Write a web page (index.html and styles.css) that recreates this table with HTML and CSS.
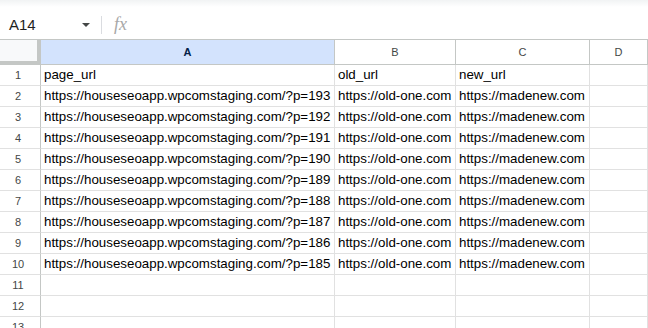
FILE: index.html
```html
<!DOCTYPE html>
<html lang="en">
<head>
    <meta charset="UTF-8">
    <meta name="viewport" content="width=device-width, initial-scale=1.0">
    <title>Redirects sheet</title>
    <link rel="stylesheet" href="styles.css">
</head>
<body>
    <div class="formula-bar">
        <div class="name-box">
            <span class="cell-ref">A14</span>
            <span class="caret"></span>
        </div>
        <span class="divider"></span>
        <span class="fx">fx</span>
    </div>

    <div class="sheet">
        <div class="corner"></div>
        <div class="col-head selected">A</div>
        <div class="col-head">B</div>
        <div class="col-head">C</div>
        <div class="col-head">D</div>

        <div class="row-head">1</div>
        <div class="cell">page_url</div>
        <div class="cell">old_url</div>
        <div class="cell">new_url</div>
        <div class="cell"></div>

        <div class="row-head">2</div>
        <div class="cell">https://houseseoapp.wpcomstaging.com/?p=193</div>
        <div class="cell">https://old-one.com</div>
        <div class="cell">https://madenew.com</div>
        <div class="cell"></div>

        <div class="row-head">3</div>
        <div class="cell">https://houseseoapp.wpcomstaging.com/?p=192</div>
        <div class="cell">https://old-one.com</div>
        <div class="cell">https://madenew.com</div>
        <div class="cell"></div>

        <div class="row-head">4</div>
        <div class="cell">https://houseseoapp.wpcomstaging.com/?p=191</div>
        <div class="cell">https://old-one.com</div>
        <div class="cell">https://madenew.com</div>
        <div class="cell"></div>

        <div class="row-head">5</div>
        <div class="cell">https://houseseoapp.wpcomstaging.com/?p=190</div>
        <div class="cell">https://old-one.com</div>
        <div class="cell">https://madenew.com</div>
        <div class="cell"></div>

        <div class="row-head">6</div>
        <div class="cell">https://houseseoapp.wpcomstaging.com/?p=189</div>
        <div class="cell">https://old-one.com</div>
        <div class="cell">https://madenew.com</div>
        <div class="cell"></div>

        <div class="row-head">7</div>
        <div class="cell">https://houseseoapp.wpcomstaging.com/?p=188</div>
        <div class="cell">https://old-one.com</div>
        <div class="cell">https://madenew.com</div>
        <div class="cell"></div>

        <div class="row-head">8</div>
        <div class="cell">https://houseseoapp.wpcomstaging.com/?p=187</div>
        <div class="cell">https://old-one.com</div>
        <div class="cell">https://madenew.com</div>
        <div class="cell"></div>

        <div class="row-head">9</div>
        <div class="cell">https://houseseoapp.wpcomstaging.com/?p=186</div>
        <div class="cell">https://old-one.com</div>
        <div class="cell">https://madenew.com</div>
        <div class="cell"></div>

        <div class="row-head">10</div>
        <div class="cell">https://houseseoapp.wpcomstaging.com/?p=185</div>
        <div class="cell">https://old-one.com</div>
        <div class="cell">https://madenew.com</div>
        <div class="cell"></div>

        <div class="row-head">11</div>
        <div class="cell"></div>
        <div class="cell"></div>
        <div class="cell"></div>
        <div class="cell"></div>

        <div class="row-head">12</div>
        <div class="cell"></div>
        <div class="cell"></div>
        <div class="cell"></div>
        <div class="cell"></div>

        <div class="row-head">13</div>
        <div class="cell"></div>
        <div class="cell"></div>
        <div class="cell"></div>
        <div class="cell"></div>
    </div>
</body>
</html>
```

FILE: styles.css
```css
body {
    margin: 0;
    font-family: "Liberation Sans", Arial, sans-serif;
    background: #fff;
    color: #000;
    overflow: hidden;
}

/* name box + fx row */
.formula-bar {
    height: 39px;
    display: flex;
    align-items: center;
    background: linear-gradient(#f1f3f4 0, #fff 7px);
    box-sizing: border-box;
    padding-top: 10px;
}

.name-box {
    width: 92px;
    display: flex;
    align-items: center;
    justify-content: space-between;
    padding-left: 9px;
    box-sizing: border-box;
}

.cell-ref {
    font-size: 15px;
    color: #1f1f1f;
}

.caret {
    width: 0;
    height: 0;
    border-left: 4px solid transparent;
    border-right: 4px solid transparent;
    border-top: 4px solid #444746;
    margin-right: 2px;
}

.divider {
    width: 1px;
    height: 18px;
    background: #dadce0;
    margin-left: 9px;
}

.fx {
    margin-left: 12px;
    font-family: "Liberation Serif", serif;
    font-style: italic;
    font-size: 18px;
    color: #a8a8a8;
}

/* grid */
.sheet {
    display: grid;
    grid-template-columns: 41px 294px 121px 134px 1fr;
    grid-template-rows: 25px repeat(13, 21px);
    border-top: 1px solid #c4c7c5;
}

.corner {
    background: #f8f9fa;
    border-right: 4px solid #c4c7c5;
    border-bottom: 4px solid #c4c7c5;
}

.col-head {
    display: flex;
    align-items: center;
    justify-content: center;
    font-size: 11px;
    color: #444746;
    border-right: 1px solid #c4c7c5;
    border-bottom: 1px solid #c4c7c5;
}

.col-head.selected {
    background: #d3e3fd;
    color: #041e49;
    font-weight: bold;
}

.row-head {
    display: flex;
    align-items: center;
    justify-content: center;
    padding-right: 4px;
    font-size: 11px;
    color: #444746;
    border-right: 1px solid #c4c7c5;
    border-bottom: 1px solid #e1e1e1;
}

.cell {
    font-size: 13.33px;
    line-height: 20px;
    padding-left: 3px;
    white-space: nowrap;
    overflow: hidden;
    border-right: 1px solid #e1e1e1;
    border-bottom: 1px solid #e1e1e1;
}
```
